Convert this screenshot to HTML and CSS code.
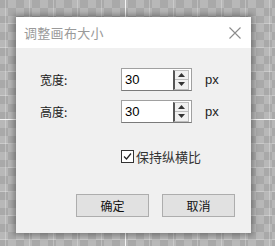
FILE: index.html
```html
<!DOCTYPE html>
<html>
<head>
<meta charset="utf-8">
<link rel="stylesheet" href="styles.css">
</head>
<body>
<div class="canvas">
  <div class="dialog">
    <div class="titlebar">
      <span class="title">调整画布大小</span>
      <svg class="close" width="12" height="12" viewBox="0 0 12 12"><path d="M0.5 0.5 L11.5 11.5 M11.5 0.5 L0.5 11.5" stroke="#8c8c8c" stroke-width="1.1" fill="none"/></svg>
    </div>
    <div class="body">
      <div class="row">
        <span class="label">宽度:</span>
        <div class="spin">
          <span class="value">30</span>
          <div class="arrows">
            <div class="arrow up"><svg width="7" height="4" viewBox="0 0 7 4"><path d="M0 4 L3.5 0 L7 4Z" fill="#333"/></svg></div>
            <div class="arrow down"><svg width="7" height="4" viewBox="0 0 7 4"><path d="M0 0 L3.5 4 L7 0Z" fill="#333"/></svg></div>
          </div>
        </div>
        <span class="unit">px</span>
      </div>
      <div class="row">
        <span class="label">高度:</span>
        <div class="spin">
          <span class="value">30</span>
          <div class="arrows">
            <div class="arrow up"><svg width="7" height="4" viewBox="0 0 7 4"><path d="M0 4 L3.5 0 L7 4Z" fill="#333"/></svg></div>
            <div class="arrow down"><svg width="7" height="4" viewBox="0 0 7 4"><path d="M0 0 L3.5 4 L7 0Z" fill="#333"/></svg></div>
          </div>
        </div>
        <span class="unit">px</span>
      </div>
      <div class="check-row">
        <span class="checkbox"><svg width="11" height="11" viewBox="0 0 11 11"><path d="M2 5.5 L4.5 8 L9 2.5" stroke="#222" stroke-width="1.2" fill="none"/></svg></span>
        <span class="check-label">保持纵横比</span>
      </div>
      <div class="buttons">
        <button class="btn">确定</button>
        <button class="btn">取消</button>
      </div>
    </div>
  </div>
</div>
</body>
</html>
```
FILE: styles.css
```css
html, body {
  margin: 0;
  padding: 0;
}
body {
  width: 275px;
  height: 246px;
  overflow: hidden;
  background-color: #a9a9a9;
  background-image:
    linear-gradient(to right, transparent 125px, rgba(255,255,255,0.8) 125px, rgba(255,255,255,0.8) 126px, transparent 126px),
    linear-gradient(to bottom, transparent 119px, rgba(255,255,255,0.8) 119px, rgba(255,255,255,0.8) 120px, transparent 120px),
    linear-gradient(to right, rgba(255,255,255,0.25) 1px, transparent 1px),
    linear-gradient(to bottom, rgba(255,255,255,0.25) 1px, transparent 1px),
    linear-gradient(45deg, #b8b8b8 25%, transparent 25%, transparent 75%, #b8b8b8 75%),
    linear-gradient(45deg, #b8b8b8 25%, transparent 25%, transparent 75%, #b8b8b8 75%);
  background-size: 100% 100%, 100% 100%, 24px 24px, 24px 24px, 16px 16px, 16px 16px;
  background-position: 0 0, 0 0, 5px 0, 0 -1px, 0 0, 8px 8px;
  background-repeat: no-repeat, no-repeat, repeat, repeat, repeat, repeat;
  font-family: "Noto Sans CJK SC", "Noto Sans", sans-serif;
}
.canvas {
  padding: 17px 0 0 16px;
}
.dialog {
  width: 235px;
  height: 216px;
  display: flex;
  flex-direction: column;
  background: #f0f0f0;
  box-shadow: 0 0 6px 2px rgba(0,0,0,0.35);
}
.titlebar {
  height: 31px;
  background: #ffffff;
  display: flex;
  align-items: center;
  justify-content: space-between;
  padding: 0 10px 0 8px;
}
.title {
  font-size: 13px;
  color: #9a9a9a;
  letter-spacing: 0.3px;
}
.close {
  display: block;
}
.body {
  flex: 1;
  display: flex;
  flex-direction: column;
  padding: 20px 16px 16px 24px;
}
.row {
  display: flex;
  align-items: center;
  height: 23px;
  margin-bottom: 9px;
}
.label {
  width: 81px;
  font-size: 12px;
  color: #1a1a1a;
}
.spin {
  width: 67px;
  height: 21px;
  border: 1px solid #a0a0a0;
  border-bottom-color: #7a7a7a;
  background: #fff;
  display: flex;
  align-items: center;
  justify-content: space-between;
  padding-right: 2px;
}
.value {
  font-family: "Liberation Sans", Arial, sans-serif;
  font-size: 13px;
  color: #000;
  padding-left: 3px;
}
.arrows {
  width: 13px;
  height: 18px;
  display: flex;
  flex-direction: column;
  border-left: 2px solid #555;
  border-right: 1px solid #bdbdbd;
  border-top: 1px solid #bdbdbd;
  border-bottom: 1px solid #bdbdbd;
  background: #f0f0f0;
}
.arrow {
  flex: 1;
  display: flex;
  align-items: center;
  justify-content: center;
}
.arrow.up {
  border-bottom: 1px solid #bdbdbd;
}
.arrow svg {
  display: block;
}
.unit {
  margin-left: 13px;
  font-family: "Liberation Sans", Arial, sans-serif;
  font-size: 13px;
  color: #222;
}
.check-row {
  display: flex;
  align-items: center;
  margin-top: 15px;
  padding-left: 81px;
}
.checkbox {
  width: 11px;
  height: 11px;
  border: 1px solid #333;
  background: #fff;
  display: flex;
}
.check-label {
  margin-left: 2px;
  font-size: 13px;
  color: #333;
}
.buttons {
  margin-top: auto;
  display: flex;
  justify-content: flex-end;
  gap: 13px;
}
.btn {
  width: 73px;
  height: 23px;
  margin: 0;
  padding: 0;
  background: #e1e1e1;
  border: 1px solid #adadad;
  font-family: "Noto Sans CJK SC", sans-serif;
  font-size: 12px;
  color: #111;
}
```
